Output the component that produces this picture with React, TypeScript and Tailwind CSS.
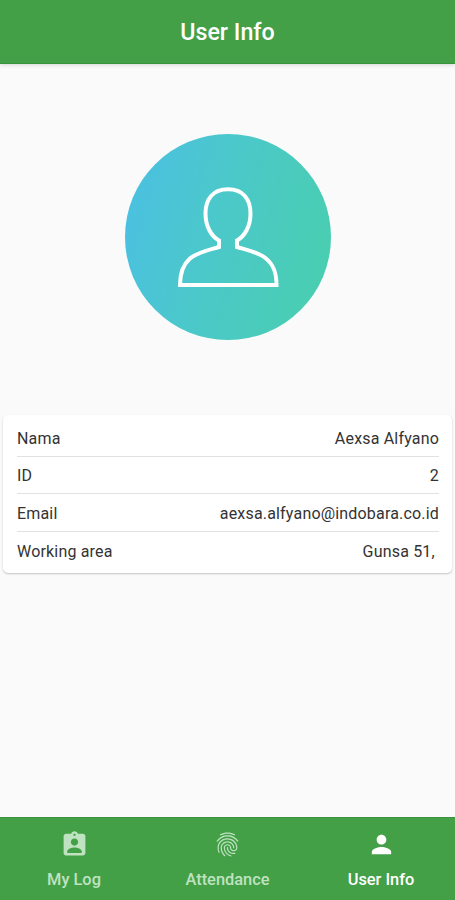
import { MdAssignmentInd, MdFingerprint, MdPerson } from "react-icons/md";

const rows = [
  { label: "Nama", value: "Aexsa Alfyano" },
  { label: "ID", value: "2" },
  { label: "Email", value: "aexsa.alfyano@indobara.co.id" },
  { label: "Working area", value: "Gunsa 51, " },
];

const tabs = [
  { label: "My Log", icon: MdAssignmentInd, active: false },
  { label: "Attendance", icon: MdFingerprint, active: false },
  { label: "User Info", icon: MdPerson, active: true },
];

function Avatar() {
  return (
    <div className="h-[206px] w-[206px] rounded-full bg-linear-[105deg,#4bbfe5,#4bc8cb_42%,#49cfac]">
      <svg viewBox="0 0 206 206" className="h-full w-full" fill="none" stroke="#fff" strokeWidth="4">
        <path d="M94 113V106.500C86 102 80.500 92 80.500 79.500C80.500 65 88 55.300 103 55.300C118 55.300 125.500 65 125.500 79.500C125.500 92 120 102 112 106.500V113C124 116.500 134 118.500 141 124.500C149 131 151.500 139 151.500 151H55C55 139 57.500 131 65 124.500C72 118.500 82 116.500 94 113Z" />
      </svg>
    </div>
  );
}

export default function App() {
  return (
    <div className="flex h-[900px] w-[455px] flex-col overflow-hidden bg-[#fafafa] font-[Roboto,sans-serif]">
      <header className="flex h-16 shrink-0 items-center justify-center border-b border-[#3a923e] bg-[#43a047] pt-0.5 shadow-[0_1px_4px_rgba(0,0,0,0.15)]">
        <h1 className="text-[23.25px] font-medium text-white">User Info</h1>
      </header>

      <main className="flex flex-1 flex-col items-center pt-[70px]">
        <Avatar />
        <div className="mt-[75px] w-[449px] rounded-[5px] bg-white pt-1 pr-[13px] pb-1 pl-3.5 shadow-[0_1px_2px_rgba(0,0,0,0.22)]">
          {rows.map((row) => (
            <div key={row.label} className="flex h-[37.5px] items-center justify-between border-b border-[#e2e2e2] pt-[3px] text-base tracking-[0.18px] text-[#333] last:border-b-0">
              <span>{row.label}</span>
              <span className="whitespace-pre">{row.value}</span>
            </div>
          ))}
        </div>
      </main>

      <nav className="flex h-[83px] shrink-0 justify-center border-t border-[#3a923e] bg-[#43a047]">
        {tabs.map(({ label, icon: Icon, active }) => (
          <a key={label} className={`flex w-[153.5px] shrink-0 flex-col items-center pt-3 ${active ? "text-white" : "text-[#bfe3c0]"}`}>
            <Icon className="h-[29px] w-[29px]" />
            <span className="mt-[9px] text-[16.4px] leading-6 font-medium">{label}</span>
          </a>
        ))}
      </nav>
    </div>
  );
}
